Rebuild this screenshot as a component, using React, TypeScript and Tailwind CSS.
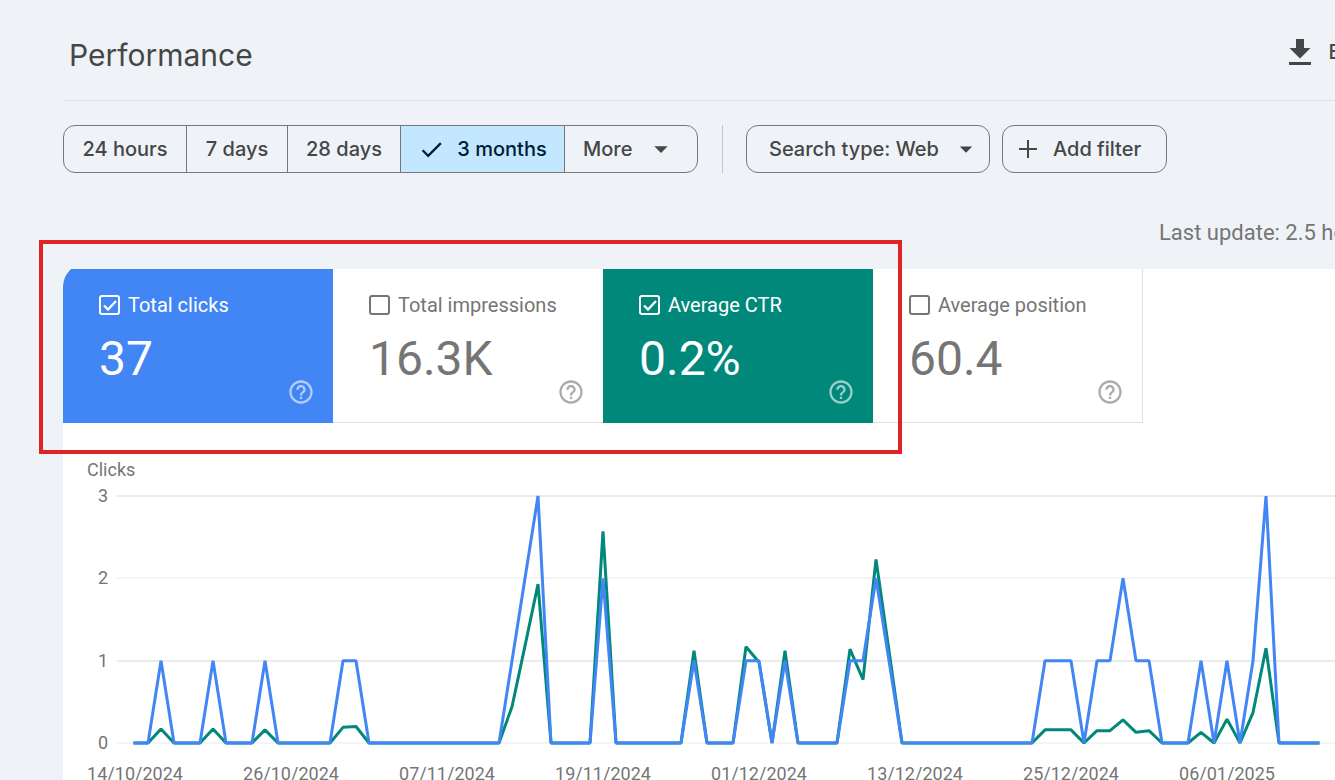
import React from "react";
import { MdArrowDropDown, MdCheck, MdHelpOutline } from "react-icons/md";

const ranges = [
    { label: "24 hours", width: "w-[123px]" },
    { label: "7 days", width: "w-[101px]" },
    { label: "28 days", width: "w-[113px]" },
    { label: "3 months", width: "w-[164px]" },
];

const metrics = [
    { id: "clicks", label: "Total clicks", value: "37", checked: true, style: "bg-[#4285f4] text-white border-[#4285f4]" },
    { id: "impressions", label: "Total impressions", value: "16.3K", checked: false, style: "bg-white text-[#757575] border-[#e0e0e0]" },
    { id: "ctr", label: "Average CTR", value: "0.2%", checked: true, style: "bg-[#00897b] text-white border-[#00897b]" },
    { id: "position", label: "Average position", value: "60.4", checked: false, style: "bg-white text-[#757575] border-[#e0e0e0] border-r" },
];

// [day, clicks, ctr], days that are missing have no clicks
const activeDays = [
    [2, 1, 0.17], [6, 1, 0.17], [10, 1, 0.16], [16, 1, 0.19], [17, 1, 0.2],
    [29, 1, 0.44], [30, 2, 1.18], [31, 3, 1.93], [36, 2, 2.57], [43, 1, 1.12],
    [47, 1, 1.17], [48, 1, 0.98], [50, 1, 1.12], [55, 1, 1.14], [56, 1, 0.77],
    [57, 2, 2.23], [58, 1, 1.12], [70, 1, 0.16], [71, 1, 0.16], [72, 1, 0.16],
    [74, 1, 0.15], [75, 1, 0.15], [76, 2, 0.28], [77, 1, 0.13], [78, 1, 0.15],
    [82, 1, 0.13], [84, 1, 0.29], [86, 1, 0.37], [87, 3, 1.15],
];

const LAST_DAY = 91;
const PLOT_HEIGHT = 247;

const ticks = ["14/10/2024", "26/10/2024", "07/11/2024", "19/11/2024", "01/12/2024", "13/12/2024", "25/12/2024", "06/01/2025"];

const toPoints = (column: number) =>
    Array.from({ length: LAST_DAY + 1 }, (_, day) => {
        const row = activeDays.find((d) => d[0] === day);
        return `${day},${3 - (row ? row[column] : 0)}`;
    }).join(" ");

function DateRange() {
    return (
        <div className="flex h-12 overflow-hidden rounded-xl border border-[#747775]">
            {ranges.map(({ label, width }) => {
                const selected = label === "3 months";
                return (
                    <button
                        key={label}
                        aria-pressed={selected}
                        className={`${width} flex items-center justify-center gap-3 border-r border-[#747775] ${selected ? "bg-[#c2e7ff] text-[#001d35]" : ""}`}
                    >
                        {selected && <MdCheck className="size-[27px]" />}
                        {label}
                    </button>
                );
            })}
            <button className="flex w-[132px] items-center gap-[13px] pl-[18px]">
                More
                <MdArrowDropDown className="size-8" />
            </button>
        </div>
    );
}

function Metric({ id, label, value, checked, style }) {
    return (
        <div className={`${style} flex h-[160px] w-[270px] flex-col border-b pt-[30px] pl-9`}>
            <label htmlFor={id} className="flex items-center gap-2 text-[20px] leading-6">
                <span className="grid place-items-center">
                    <input
                        id={id}
                        type="checkbox"
                        defaultChecked={checked}
                        className="peer col-start-1 row-start-1 h-5 w-[21px] appearance-none rounded-[3px] border-2 border-current"
                    />
                    <svg viewBox="0 0 14 14" className="invisible col-start-1 row-start-1 size-[14px] peer-checked:visible">
                        <path d="M1 7.500 5 11.500 13 3" fill="none" stroke="currentColor" strokeWidth="2.4" />
                    </svg>
                </span>
                {label}
            </label>
            <p className="mt-4 text-[48px] leading-[52px]">{value}</p>
            <button aria-label={`About ${label}`} className="-mt-[7px] mr-[18px] self-end opacity-60">
                <MdHelpOutline className="size-7" />
            </button>
        </div>
    );
}

function Chart() {
    return (
        <div className="pt-9 pl-6">
            <h2 className="text-[18px] leading-[22px]">Clicks</h2>
            <div className="pt-[15px] pr-[103px] pl-12">
                <svg className="block h-[300px] w-full overflow-visible text-[18px]" fill="#757575">
                    {[3, 2, 1, 0].map((n) => {
                        const y = Math.round(((3 - n) * PLOT_HEIGHT) / 3);
                        return (
                            <g key={n}>
                                <line x1="-18" x2="110%" y1={y} y2={y} stroke="#ebebeb" strokeWidth={n % 2 ? 2 : 1} />
                                <text x="-27" y={y + 6} textAnchor="end">{n}</text>
                            </g>
                        );
                    })}
                    <svg
                        width="100%"
                        height={PLOT_HEIGHT}
                        viewBox={`0 0 ${LAST_DAY} 3`}
                        preserveAspectRatio="none"
                        className="overflow-visible"
                        fill="none"
                        strokeWidth="3"
                        strokeLinejoin="bevel"
                        strokeLinecap="square"
                    >
                        <polyline points={toPoints(2)} stroke="#00897b" vectorEffect="non-scaling-stroke" />
                        <polyline points={toPoints(1)} stroke="#4285f4" vectorEffect="non-scaling-stroke" />
                    </svg>
                    {ticks.map((date, i) => (
                        <text key={date} x={`${(i * 12 * 100) / LAST_DAY}%`} y="284" textAnchor="middle">{date}</text>
                    ))}
                </svg>
            </div>
        </div>
    );
}

function App() {
    return (
        <main className="h-screen overflow-hidden bg-[#eff3f8] pl-[63px] font-['Roboto',sans-serif] whitespace-nowrap text-[#757575]">
            {/* The report is wider than the window and runs off its right side */}
            <div className="-mr-[86px]">
                <header className="flex h-[101px] items-center justify-between border-b border-[#dde0e4] pr-[30px] pl-[6px] font-['Inter',sans-serif] text-[#444746]">
                    <h1 className="pt-[10px] text-[30px] leading-10">Performance</h1>
                    <button className="flex items-center gap-[17px] pt-1 text-[20px] font-medium">
                        <svg viewBox="0 0 22 26" className="h-[26px] w-[22px]" fill="currentColor">
                            <path d="M7 0h8v9h6.500L11 19.500.5 9H7zM0 23h22v3H0z" />
                        </svg>
                        Export
                    </button>
                </header>

                <div className="flex pt-6 font-['Inter',sans-serif] text-[20px] font-medium text-[#444746]">
                    <DateRange />
                    <div className="mr-[23px] ml-6 w-px bg-[#c4c7c5]" />
                    <button className="flex h-12 w-[244px] items-center justify-between rounded-xl border border-[#747775] pr-2 pl-[22px]">
                        Search type: Web
                        <MdArrowDropDown className="size-[30px]" />
                    </button>
                    <button className="ml-3 flex h-12 w-[165px] items-center gap-[15px] rounded-xl border border-[#747775] pl-[15px]">
                        <svg viewBox="0 0 20 20" className="size-5" stroke="currentColor" strokeWidth="2">
                            <path d="M10 1v18M1 10h18" />
                        </svg>
                        Add filter
                    </button>
                </div>

                <p className="pt-[46px] pl-[1096px] text-[22px] leading-7">Last update: 2.5 hours ago</p>

                <section className="relative mt-[22px]">
                    <div className="overflow-hidden">
                        <div className="-mt-[6px] overflow-hidden rounded-tl-[24px] bg-white">
                            <div className="flex">
                                {metrics.map((metric) => (
                                    <Metric key={metric.id} {...metric} />
                                ))}
                            </div>
                            <Chart />
                        </div>
                    </div>
                    <div className="pointer-events-none absolute -top-[29px] -left-6 h-[214px] w-[863px] border-4 border-[#e02424]" />
                </section>
            </div>
        </main>
    );
}

export default App;
